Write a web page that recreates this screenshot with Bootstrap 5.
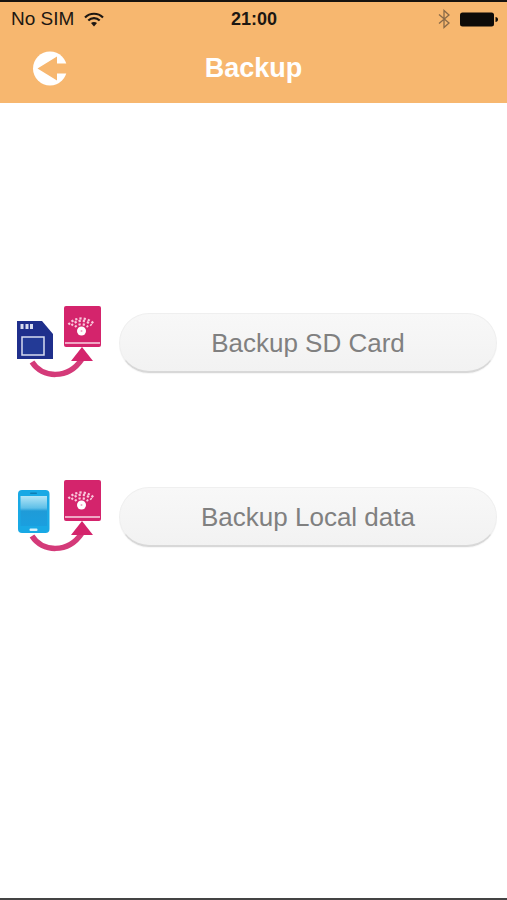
<!DOCTYPE html>
<html lang="en">
<head>
    <meta charset="UTF-8">
    <meta name="viewport" content="width=device-width, initial-scale=1.0">
    <title>Backup</title>
    <link rel="stylesheet" href="https://cdn.jsdelivr.net/npm/bootstrap@5.3.0/dist/css/bootstrap.min.css">
    <style>
        html, body {
            height: 100%;
        }
        body {
            font-family: "Liberation Sans", Arial, sans-serif;
            background-color: #fff;
        }
        .app-screen {
            height: 900px;
            border-top: 2px solid #161310;
            border-bottom: 2px solid #444;
        }
        .app-header {
            height: 101px;
            background-color: #f7b76f;
        }
        .status-bar {
            height: 34px;
            padding: 0 8px 0 11px;
            font-size: 19px;
            color: #1d1712;
        }
        .status-left {
            width: 120px;
            gap: 10px;
        }
        .status-right {
            width: 122px;
            gap: 9px;
        }
        .status-time {
            font-weight: 700;
            font-size: 18px;
        }
        .title-bar {
            height: 65px;
            padding-left: 32px;
        }
        .back-icon {
            width: 36px;
            height: 36px;
            flex: none;
        }
        .screen-title {
            font-size: 27px;
            font-weight: 700;
            color: #fff;
            margin: 0;
            line-height: 1;
            padding-bottom: 2px;
        }
        .backup-list {
            padding: 202px 10px 0 16px;
            gap: 100px;
        }
        .backup-row {
            height: 74px;
            gap: 18px;
        }
        .backup-icon {
            width: 86px;
            height: 74px;
            flex: none;
        }
        .backup-btn {
            height: 60px;
            margin-top: 8px;
            margin-left: -1px;
            padding-top: 8px;
            border-radius: 30px;
            border: 1px solid #efefef;
            border-bottom: 2px solid #d8d8d8;
            background: linear-gradient(#f8f8f8, #f2f2f2);
            color: #808080;
            font-size: 26px;
            box-shadow: 0 1px 1px rgba(0, 0, 0, .04);
        }
    </style>
</head>
<body>
    <svg width="0" height="0" class="position-absolute">
        <defs>
            <linearGradient id="phoneFill" x1="0" y1="0" x2="0" y2="1">
                <stop offset="0" stop-color="#b4e6f7"/>
                <stop offset="0.4" stop-color="#5fc0e8"/>
                <stop offset="0.5" stop-color="#1f9bd8"/>
                <stop offset="1" stop-color="#1a9fdf"/>
            </linearGradient>
            <symbol id="routerBox" viewBox="0 0 86 74">
                <rect x="48" y="1" width="37" height="41" rx="2" fill="#d4246c"/>
                <path d="M49 38H84" stroke="#f9d3e2" stroke-width="1.500"/>
                <g fill="none" stroke="#f9c8dc" stroke-width="2.200" stroke-dasharray="2.200 2">
                    <path d="M52.500 19.500A17 17 0 0 1 78.500 19.500"/>
                    <path d="M55.500 20.500A13 13 0 0 1 75.500 20.500"/>
                    <path d="M59 22A9 9 0 0 1 72 22"/>
                </g>
                <circle cx="65.500" cy="26" r="4.500" fill="#fff"/>
                <circle cx="65.500" cy="26" r="1" fill="#f0a0c0"/>
                <path d="M16 57C26 73 52 75 66 54" fill="none" stroke="#d43a79" stroke-width="5.500"/>
                <path d="M55 56L66 42L77 56Z" fill="#d4246c"/>
            </symbol>
        </defs>
    </svg>

    <div class="app-screen d-flex flex-column">
        <header class="app-header">
            <div class="status-bar d-flex align-items-center justify-content-between">
                <div class="status-left d-flex align-items-center">
                    <span class="text-nowrap">No SIM</span>
                    <svg width="20" height="15" viewBox="0 0 20 15">
                        <g fill="none" stroke="#1d1712" stroke-width="2.200">
                            <path d="M1 5.500C6 .5 14 .5 19 5.500"/>
                            <path d="M4.300 8.500C7.500 5.300 12.500 5.300 15.700 8.500"/>
                        </g>
                        <path d="M7 11C8.600 9.500 11.400 9.500 13 11L10 14.500Z" fill="#1d1712"/>
                    </svg>
                </div>
                <span class="status-time">21:00</span>
                <div class="status-right d-flex align-items-center justify-content-end">
                    <svg width="14" height="20" viewBox="0 0 12 20">
                        <path d="M1 5.500L11 14L6 18.500V1.500L11 6L1 14.500" fill="none" stroke="#8a6a48" stroke-width="1.300"/>
                    </svg>
                    <svg width="39" height="15" viewBox="0 0 39 15">
                        <rect x="0" y="0.500" width="34" height="14" rx="2.500" fill="#0d0b09"/>
                        <path d="M35.500 5C37 5 38 6 38 7.500S37 10 35.500 10Z" fill="#0d0b09"/>
                    </svg>
                </div>
            </div>
            <div class="title-bar position-relative d-flex align-items-center">
                <svg class="back-icon" viewBox="0 0 36 36">
                    <circle cx="18" cy="17.500" r="17" fill="#fff"/>
                    <path d="M5.500 17.500L25 5.500V12.500H36V22.500H25V29.500Z" fill="#f7b76f"/>
                </svg>
                <h1 class="screen-title position-absolute top-50 start-50 translate-middle">Backup</h1>
            </div>
        </header>

        <main class="backup-list d-flex flex-column">
            <div class="backup-row d-flex align-items-start">
                <svg class="backup-icon" viewBox="0 0 86 74">
                    <use href="#routerBox"/>
                    <path d="M1 16H26L37 29V54H1Z" fill="#1f2f8c"/>
                    <path d="M4.500 19h3v5h-3zM9.500 19h3v5h-3zM14 19h3v5h-3z" fill="#d8dcf0"/>
                    <rect x="6" y="32" width="22" height="18" fill="#233a96" stroke="#d8dcf0" stroke-width="1.500"/>
                </svg>
                <button type="button" class="btn backup-btn flex-grow-1">Backup SD Card</button>
            </div>
            <div class="backup-row d-flex align-items-start">
                <svg class="backup-icon" viewBox="0 0 86 74">
                    <use href="#routerBox"/>
                    <rect x="2" y="11" width="31.500" height="43" rx="4" fill="#19a9e5"/>
                    <rect x="4.500" y="17" width="26.500" height="30" fill="url(#phoneFill)"/>
                    <rect x="14" y="13.500" width="7" height="1.500" rx=".7" fill="#0f7fb5"/>
                    <rect x="13.500" y="49.500" width="8" height="2.500" rx="1" fill="#d8f2fc"/>
                </svg>
                <button type="button" class="btn backup-btn flex-grow-1">Backup Local data</button>
            </div>
        </main>
    </div>

    <script src="https://cdn.jsdelivr.net/npm/bootstrap@5.3.0/dist/js/bootstrap.bundle.min.js"></script>
</body>
</html>
